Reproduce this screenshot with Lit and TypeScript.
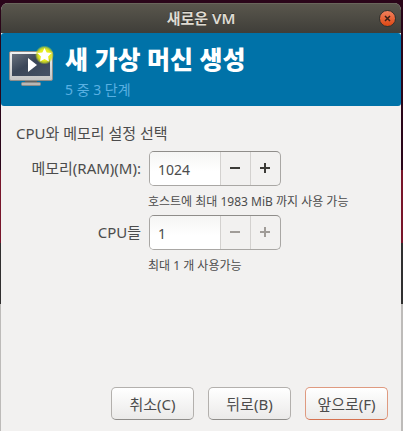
import { LitElement, html, css, svg } from "lit";
import { customElement, property } from "lit/decorators.js";

@customElement("spin-field")
class SpinField extends LitElement {
  @property() label = "";
  @property() hint = "";
  @property({ type: Number }) value = 1;
  @property({ type: Number }) max = 1;

  static styles = css`
    :host {
      display: grid;
      grid-template-columns: 125px auto 1fr;
      column-gap: 8px;
      align-items: center;
    }
    .label {
      text-align: right;
      line-height: 20px;
      padding-bottom: 2px;
    }
    .box {
      display: flex;
      box-sizing: border-box;
      width: 132px;
      height: 35px;
      border: 1px solid #a9a7a4;
      border-top-color: #8f8d8a;
      border-radius: 5px;
      background: #f2f1f0;
      overflow: hidden;
    }
    .value {
      flex: 1;
      min-width: 0;
      box-sizing: border-box;
      padding: 2px 8px 0;
      border: 0;
      outline: 0;
      background: linear-gradient(#f5f5f4, #ffffff 60%);
      color: #4c4c4c;
      font: inherit;
      font-size: 14px;
      appearance: textfield;
      -moz-appearance: textfield;
    }
    .value::-webkit-inner-spin-button {
      appearance: none;
      -webkit-appearance: none;
      margin: 0;
    }
    .step {
      display: flex;
      align-items: center;
      justify-content: center;
      box-sizing: border-box;
      width: 30px;
      padding: 0 2px 2px 0;
      border: 0;
      border-left: 1px solid #d3d1cf;
      background: transparent;
      color: #3c3b37;
    }
    .step:disabled {
      color: #a09c98;
    }
    .hint {
      grid-column: 2 / 4;
      font-size: 12px;
      line-height: 18px;
      padding: 7px 0 4px;
      margin-left: -1px;
    }
  `;

  private change(delta: number) {
    this.value = Math.min(this.max, Math.max(1, this.value + delta));
  }

  render() {
    const fixed = this.max <= 1;
    return html`
      <label class="label" for="value">${this.label}</label>
      <div class="box">
        <input class="value" id="value" type="number" min="1" max=${this.max} .value=${String(this.value)} />
        <button class="step" aria-label="-" ?disabled=${fixed} @click=${() => this.change(-1)}>
          <svg width="10" height="10" viewBox="0 0 10 10"><path d="M0 4h10v2H0z" fill="currentColor" /></svg>
        </button>
        <button class="step" aria-label="+" ?disabled=${fixed} @click=${() => this.change(1)}>
          <svg width="10" height="10" viewBox="0 0 10 10"><path d="M4 0h2v4h4v2H6v4H4V6H0V4h4z" fill="currentColor" /></svg>
        </button>
      </div>
      <div class="hint">${this.hint}</div>
    `;
  }
}

const monitor = svg`
  <defs>
    <linearGradient id="frame" x1="0" y1="0" x2="0" y2="1">
      <stop offset="0" stop-color="#f4f4f4" />
      <stop offset="1" stop-color="#c4c4c4" />
    </linearGradient>
    <linearGradient id="screen" x1="0" y1="0" x2="1" y2="1">
      <stop offset="0" stop-color="#69717d" />
      <stop offset="0.45" stop-color="#3b4658" />
      <stop offset="1" stop-color="#465266" />
    </linearGradient>
    <radialGradient id="glow">
      <stop offset="0.6" stop-color="#e6ec1c" />
      <stop offset="0.8" stop-color="#d3df20" stop-opacity="0.75" />
      <stop offset="1" stop-color="#b8d82a" stop-opacity="0" />
    </radialGradient>
  </defs>
  <path d="M16 34h12v3H16z" fill="#5d6264" />
  <rect x="12.5" y="36.5" width="19" height="3" rx="1" fill="#b9b8b6" stroke="#8c8b88" />
  <rect x="0.5" y="5.5" width="43" height="29" rx="1.5" fill="url(#frame)" stroke="#8e8d8a" />
  <rect x="3" y="8" width="38" height="22" fill="url(#screen)" />
  <path d="M19 12v14l9-7z" fill="#fff" />
  <circle cx="35.500" cy="9" r="9.500" fill="url(#glow)" />
  <path d="M35.500 2l2.200 4.400 4.900.7-3.500 3.400.8 4.900-4.400-2.300-4.400 2.300.8-4.900-3.500-3.400 4.900-.7z" fill="#fff" />
`;

@customElement("app-root")
class AppRoot extends LitElement {
  static styles = css`
    :host {
      display: flex;
      box-sizing: border-box;
      min-height: 100vh;
      padding: 3px 2px 0 1px;
      background: linear-gradient(#2a0519 0 170px, #78152a 170px 243px, #302f2f 243px 304px, #bdbbb9 304px);
      color: #4c4c4c;
      font-family: "Noto Sans", "Noto Sans CJK KR", sans-serif;
      font-size: 15px;
    }
    .window {
      flex: 1;
      display: flex;
      flex-direction: column;
      border-radius: 7px 7px 0 0;
      background: #f2f1f0;
      overflow: hidden;
    }
    .titlebar {
      display: grid;
      grid-template-columns: 22px 1fr 22px;
      align-items: center;
      height: 30px;
      background: linear-gradient(#5a574d, #3f3e39);
      box-shadow: inset 0 1px #69665b;
    }
    .caption {
      grid-column: 2;
      text-align: center;
      color: #dfdbd2;
      font-size: 15px;
      font-weight: 600;
      line-height: 30px;
      text-shadow: 0 -1px #32312d;
    }
    .close {
      width: 17px;
      height: 17px;
      padding: 0;
      display: flex;
      align-items: center;
      justify-content: center;
      border: 1px solid #33322e;
      border-radius: 50%;
      background: linear-gradient(#f2805c, #dd4814);
      color: #3a2018;
    }
    .banner {
      display: flex;
      gap: 11px;
      box-sizing: border-box;
      height: 73px;
      padding: 9px 8px;
      border-radius: 3px;
      background: #0072a8;
    }
    .icon {
      flex: none;
      margin-top: 4px;
    }
    .title {
      margin: 0;
      color: #fff;
      font-size: 25px;
      font-weight: 800;
      line-height: 34px;
    }
    .step {
      margin: 0;
      color: #59b0e2;
      font-size: 14px;
      line-height: 28px;
    }
    .body {
      flex: 1;
      display: flex;
      flex-direction: column;
      padding: 17px 13px 11px 15px;
    }
    .intro {
      margin: 0 0 8px;
      line-height: 20px;
    }
    .actions {
      display: flex;
      justify-content: flex-end;
      gap: 14px;
      margin-top: auto;
    }
    .action {
      box-sizing: border-box;
      width: 83px;
      height: 33px;
      padding: 0;
      border: 1px solid #b3b0ad;
      border-bottom-color: #8f8d8a;
      border-radius: 5px;
      background: linear-gradient(#ffffff, #ebeae9);
      color: #4c4c4c;
      font: inherit;
      line-height: 20px;
    }
    .primary {
      border-color: #df9a80;
      border-bottom-color: #d57250;
    }
  `;

  render() {
    return html`
      <div class="window">
        <header class="titlebar">
          <div class="caption">새로운 VM</div>
          <button class="close" aria-label="×">
            <svg width="7" height="7" viewBox="0 0 7 7"><path d="M1 1l5 5M6 1L1 6" stroke="currentColor" stroke-width="1.500" /></svg>
          </button>
        </header>
        <div class="banner">
          <svg class="icon" width="45" height="42" viewBox="0 0 45 42">${monitor}</svg>
          <div>
            <h1 class="title">새 가상 머신 생성</h1>
            <p class="step">5 중 3 단계</p>
          </div>
        </div>
        <main class="body">
          <p class="intro">CPU와 메모리 설정 선택</p>
          <spin-field label="메모리(RAM)(M):" hint="호스트에 최대 1983 MiB 까지 사용 가능" .value=${1024} .max=${1983}></spin-field>
          <spin-field label="CPU들" hint="최대 1 개 사용가능" .value=${1} .max=${1}></spin-field>
          <div class="actions">
            <button class="action">취소(C)</button>
            <button class="action">뒤로(B)</button>
            <button class="action primary">앞으로(F)</button>
          </div>
        </main>
      </div>
    `;
  }
}
